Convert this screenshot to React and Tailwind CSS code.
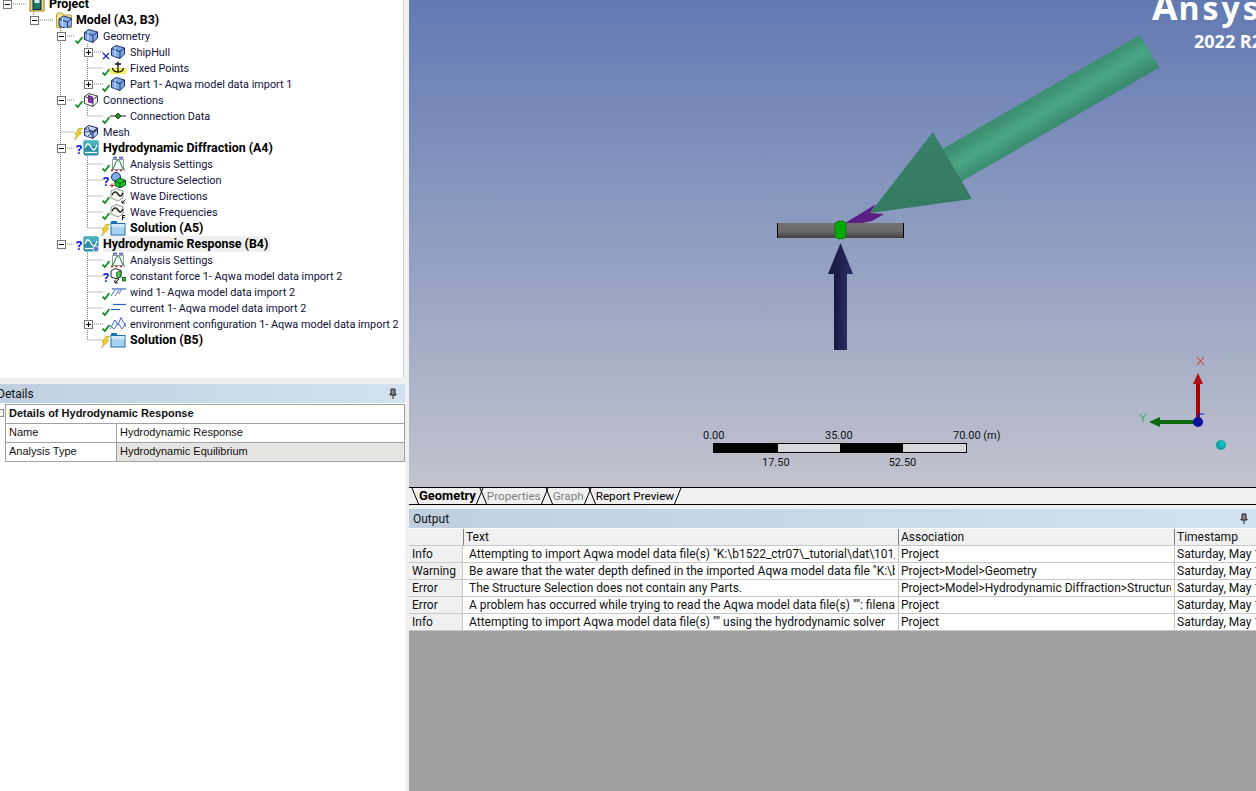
import React from 'react';

const Cube = ({ fill = '#7fa8e8', x = 0, y = 0 }) => (
    <g transform={`translate(${x} ${y})`} stroke="#1b2f6b" strokeWidth="1" strokeLinejoin="round">
        <path d="M1.5 4.5 L6 1.5 L14.5 4 L14.5 10 L10 14.5 L1.5 11.5 Z" fill={fill} />
        <path d="M1.5 4.5 L10 7.5 L14.5 4 M10 7.5 L10 14.5" fill="none" />
        <path d="M5 3 L5 12.5" stroke="#dbe7fb" fill="none" />
    </g>
);

const WaveBox = ({ clock }) => (
    <g>
        <rect x="0.5" y="0.5" width="15" height="15" rx="2" fill="#2a8ea0" />
        <path d="M0.5 0.5 H15.5 V6 H0.5 Z" fill="#46b0bc" />
        <path d="M2 8 C4 2, 6 3, 8 7 S12 11, 14 5" stroke="#fff" strokeWidth="1.3" fill="none" />
        <path d="M2 12.5 H14" stroke="#fff" strokeWidth="1.3" />
        {clock && <circle cx="13" cy="13" r="3" fill="#5b7fd0" stroke="#fff" strokeWidth="0.8" />}
    </g>
);

const Folder = () => (
    <g>
        <path d="M0.5 3 L1.5 1 H6.5 L7.5 3 H15.5 V15.5 H0.5 Z" fill="#1a6fb0" />
        <rect x="1.5" y="4" width="13" height="10.5" fill="#a9d2f2" />
        <rect x="1.5" y="4" width="13" height="3" fill="#d3e9fa" />
    </g>
);

const Bell = () => (
    <g fill="none">
        <path d="M1 3 H5 M2 1.5 V3 M4 1.5 V3 M7 3 H11 M8 1.5 V3 M10 1.5 V3" stroke="#2233bb" transform="translate(2 -1)" />
        <rect x="2.5" y="3.5" width="11" height="10" stroke="#999" />
        <path d="M1.5 13.5 C5 13, 5 4, 8 4 S11 13, 14.5 13.5" stroke="#2c8a4a" strokeWidth="1.2" />
        <path d="M1 14.5 H15" stroke="#c02020" strokeDasharray="2 2.5" strokeWidth="1.5" />
    </g>
);

const WaveCube = ({ mark }) => (
    <g>
        <path d="M1 3 L6 0.5 L13 3 L13 10 L8 13 L1 10 Z" fill="#f4f4ee" stroke="#999" />
        <path d="M2 7 C4 3, 6 3, 8 6 S11 9, 13 5" stroke="#111" strokeWidth="1.4" fill="none" />
        {mark === 'arrow' && <path d="M15.5 11.5 L12 15 M12 12.5 V15 H14.5" stroke="#111" fill="none" />}
        {mark === 'f' && <path d="M15 11.5 H12.5 V16 M12.5 13.5 H14.5" stroke="#111" fill="none" />}
    </g>
);

const icons = {
    project: (
        <g>
            <rect x="1" y="1" width="14" height="14" fill="#f2d878" stroke="#9a7d20" />
            <rect x="4" y="2.5" width="8" height="11" fill="#1f7a6a" stroke="#124" />
            <rect x="5.5" y="4" width="5" height="3" fill="#cfeee8" />
        </g>
    ),
    model: (
        <g>
            <path d="M0.5 3 L1.5 1 H6.5 L7.5 3 H15.5 V15.5 H0.5 Z" fill="#f4e08e" stroke="#b9a24a" />
            <Cube x="1.5" y="2.5" fill="#86afe8" />
        </g>
    ),
    cube: <Cube />,
    anchor: (
        <g>
            <rect x="0" y="8" width="16" height="6" fill="#f7f05a" />
            <path d="M8 1.5 V12 M5 4 H11 M2.5 8 C3 11, 5 12, 8 12 S13 11, 13.5 8" stroke="#111" strokeWidth="1.3" fill="none" />
        </g>
    ),
    connections: (
        <g stroke="#444" fill="#f4f4f4">
            <path d="M1.5 4.5 L6 1.5 L14.5 4 L14.5 10 L10 14.5 L1.5 11.5 Z" />
            <path d="M5.5 3.5 L9.5 5 L9.5 11 L5.5 10 Z" fill="#a52cc8" stroke="#6b1f85" />
            <path d="M1.5 4.5 L10 7.5 L14.5 4 M10 7.5 L10 14.5" fill="none" />
        </g>
    ),
    connectionData: (
        <g>
            <path d="M0 8 H16" stroke="#222" />
            <path d="M8 5 L11 8 L8 11 L5 8 Z" fill="#1f8a2a" stroke="#0d5a15" />
        </g>
    ),
    mesh: (
        <g>
            <Cube fill="#c5d6f0" />
            <path d="M1.5 8 L14.5 7 M5 3 L10 14 M10 7.5 L5 12 M14.5 4 L10 10" stroke="#1b2f6b" strokeWidth="0.8" fill="none" />
        </g>
    ),
    diffraction: <WaveBox />,
    response: <WaveBox clock />,
    settings: <Bell />,
    selection: (
        <g>
            <circle cx="6" cy="5" r="4.5" fill="#7fa8e8" stroke="#1b2f6b" />
            <path d="M5 9 L10 6 L15.5 8.5 L15.5 13 L10 16 L5 13.5 Z" fill="#18c828" stroke="#0a4d12" />
            <path d="M5 9 L10 11.5 L15.5 8.5 M10 11.5 V16" stroke="#0a4d12" fill="none" />
            <path d="M0 13.5 H4 M2 11.5 V15.5" stroke="#c01818" fill="none" />
        </g>
    ),
    waveDir: <WaveCube mark="arrow" />,
    waveFreq: <WaveCube mark="f" />,
    solution: <Folder />,
    force: (
        <g>
            <path d="M1 3 L5 0.5 L11 2.5 L11 8.5 L7 11 L1 9 Z" fill="#fff" stroke="#222" />
            <path d="M6.5 4.5 L11 2.5 L11 8.5 L7 11 Z" fill="#37d637" stroke="#222" strokeWidth="0.7" />
            <path d="M9 11 L5 15 M5 12 V15 H8" stroke="#111" fill="none" />
            <rect x="12.5" y="9.5" width="3.5" height="3.5" fill="#18c828" stroke="#111" strokeWidth="0.6" />
        </g>
    ),
    wind: (
        <g stroke="#2f5fc0" fill="none">
            <path d="M2 5 H16" strokeWidth="1.2" />
            <path d="M1 12 L5 6 M5 12 L9 6 M9 10 L11 6" strokeWidth="0.9" />
        </g>
    ),
    current: (
        <g stroke="#2f5fc0" fill="none" strokeWidth="1.2">
            <path d="M3 4.5 H16" />
            <path d="M1 9.5 H10" />
        </g>
    ),
    environment: <path d="M0 13 L5 4 L8 9 L11 1.5 L16 11 M0 9 L4 13 L8 7 L12 13 L16 7" stroke="#2f5fc0" strokeWidth="0.9" fill="none" />,
};

const Status = ({ type }) => {
    if (type === 'check') {
        return (
            <svg width="8" height="8" viewBox="0 0 8 8" className="self-end">
                <path d="M0.5 4.5 L2.8 7 L7.5 1" stroke="#0b8f1c" strokeWidth="1.8" fill="none" />
            </svg>
        );
    }
    if (type === 'cross') {
        return (
            <svg width="8" height="8" viewBox="0 0 8 8" className="self-end">
                <path d="M1 1 L7 7 M7 1 L1 7" stroke="#1a2fb0" strokeWidth="1.4" fill="none" />
            </svg>
        );
    }
    if (type === 'bolt') {
        return (
            <svg width="9" height="12" viewBox="0 0 9 12" className="self-end shrink-0 -ml-px">
                <path d="M5 0 L8.5 0 L5.5 4.5 L8 4.5 L0.5 12 L3 6.5 L1 6.5 Z" fill="#f1d21c" stroke="#8a7a10" strokeWidth="0.4" />
            </svg>
        );
    }
    if (type === 'question') {
        return <span className="self-end w-2 text-center text-[13px] leading-[12px] font-bold text-[#1420e0]">?</span>;
    }
    return null;
};

// level, expander, status, icon, label, bold
const treeRows = [
    { pl: 'pl-[3px]', exp: '-', icon: 'project', label: 'Project', bold: true },
    { pl: 'pl-[30px]', exp: '-', icon: 'model', label: 'Model (A3, B3)', bold: true },
    { pl: 'pl-[57px]', exp: '-', status: 'check', icon: 'cube', label: 'Geometry' },
    { pl: 'pl-[84px]', exp: '+', status: 'cross', icon: 'cube', label: 'ShipHull' },
    { pl: 'pl-[84px]', status: 'check', icon: 'anchor', label: 'Fixed Points' },
    { pl: 'pl-[84px]', exp: '+', status: 'check', icon: 'cube', label: 'Part 1- Aqwa model data import 1' },
    { pl: 'pl-[57px]', exp: '-', status: 'check', icon: 'connections', label: 'Connections' },
    { pl: 'pl-[84px]', status: 'check', icon: 'connectionData', label: 'Connection Data' },
    { pl: 'pl-[57px]', status: 'bolt', icon: 'mesh', label: 'Mesh' },
    { pl: 'pl-[57px]', exp: '-', status: 'question', icon: 'diffraction', label: 'Hydrodynamic Diffraction (A4)', bold: true },
    { pl: 'pl-[84px]', status: 'check', icon: 'settings', label: 'Analysis Settings' },
    { pl: 'pl-[84px]', status: 'question', icon: 'selection', label: 'Structure Selection' },
    { pl: 'pl-[84px]', status: 'check', icon: 'waveDir', label: 'Wave Directions' },
    { pl: 'pl-[84px]', status: 'check', icon: 'waveFreq', label: 'Wave Frequencies' },
    { pl: 'pl-[84px]', status: 'bolt', icon: 'solution', label: 'Solution (A5)', bold: true },
    { pl: 'pl-[57px]', exp: '-', status: 'question', icon: 'response', label: 'Hydrodynamic Response (B4)', bold: true, selected: true },
    { pl: 'pl-[84px]', status: 'check', icon: 'settings', label: 'Analysis Settings' },
    { pl: 'pl-[84px]', status: 'question', icon: 'force', label: 'constant force 1- Aqwa model data import 2' },
    { pl: 'pl-[84px]', status: 'check', icon: 'wind', label: 'wind 1- Aqwa model data import 2' },
    { pl: 'pl-[84px]', status: 'check', icon: 'current', label: 'current 1- Aqwa model data import 2' },
    { pl: 'pl-[84px]', exp: '+', status: 'check', icon: 'environment', label: 'environment configuration 1- Aqwa model data import 2' },
    { pl: 'pl-[84px]', status: 'bolt', icon: 'solution', label: 'Solution (B5)', bold: true },
];

const Expander = ({ kind }) => (
    <svg width="9" height="9" viewBox="0 0 9 9" className="shrink-0 relative z-10">
        <rect x="0.5" y="0.5" width="8" height="8" fill="#fff" stroke="#777" />
        <path d={kind === '+' ? 'M2 4.5 H7 M4.5 2 V7' : 'M2 4.5 H7'} stroke="#000" />
    </svg>
);

const TreeRow = ({ row }) => (
    <div className={`flex items-center h-4 ${row.pl}`}>
        <div className="w-[9px] shrink-0 flex">{row.exp && <Expander kind={row.exp} />}</div>
        <div className="w-[9px] shrink-0" />
        <div className="w-2 h-4 shrink-0 flex items-end relative z-10"><Status type={row.status} /></div>
        <svg width="16" height="16" viewBox="0 0 16 16" className="shrink-0 relative z-10">{icons[row.icon]}</svg>
        <span className={`ml-1 whitespace-nowrap leading-4 ${row.bold ? 'text-[12.4px] font-bold text-[#000]' : 'text-[10.85px] mt-px text-[#101038]'} ${row.selected ? 'bg-[#f0f0f0] pr-[2px]' : ''}`}>
            {row.label}
        </span>
    </div>
);

// dotted tree guides
const guides = 'M11 4 H27 M33.5 12 V16 M38 20 H54 M60.5 26 V244 M65 36 H75 M65 100 H75 M60.5 132 H75 M65 148 H75 M65 244 H75 M87.5 44 V80 M92 52 H103 M87.5 68 H103 M92 84 H103 M87.5 104 V116 H103 M87.5 156 V228 M87.5 164 H103 M87.5 180 H103 M87.5 196 H103 M87.5 212 H103 M87.5 228 H103 M87.5 252 V340 M87.5 260 H103 M87.5 276 H103 M87.5 292 H103 M87.5 308 H103 M92 324 H103 M87.5 340 H103';

const Pin = () => (
    <svg width="8" height="11" viewBox="0 0 8 11" className="shrink-0">
        <path d="M2 1 H6 V6 H7 V7 H1 V6 H2 Z M4 7 V11" stroke="#222" fill="#888" strokeWidth="1" />
    </svg>
);

const Scene = () => (
    <svg viewBox="0 0 847 487" width="847" height="487" className="absolute inset-0">
        <defs>
            <linearGradient id="shaft" x1="1140" y1="35" x2="1159.5" y2="67.5" gradientUnits="userSpaceOnUse">
                <stop offset="0" stopColor="#3d8f72" />
                <stop offset="0.45" stopColor="#4aa684" />
                <stop offset="1" stopColor="#37866b" />
            </linearGradient>
            <linearGradient id="cone" x1="0" y1="0" x2="0" y2="1">
                <stop offset="0" stopColor="#3a7f68" />
                <stop offset="1" stopColor="#347a62" />
            </linearGradient>
            <linearGradient id="barGrad" x1="0" y1="0" x2="0" y2="1">
                <stop offset="0" stopColor="#727272" />
                <stop offset="0.55" stopColor="#6a6a6a" />
                <stop offset="1" stopColor="#404040" />
            </linearGradient>
            <linearGradient id="navy" x1="0" y1="0" x2="1" y2="0">
                <stop offset="0" stopColor="#15173d" />
                <stop offset="1" stopColor="#2a2d63" />
            </linearGradient>
            <radialGradient id="ball" cx="0.6" cy="0.4" r="0.7">
                <stop offset="0" stopColor="#18c8c8" />
                <stop offset="1" stopColor="#0f8a90" />
            </radialGradient>
        </defs>
        <g transform="translate(-409 0)">
            <path d="M930 156 L1140 35 L1159.5 67.5 L950 188 Z" fill="url(#shaft)" />
            <path d="M845 223 L860 214 L876 204 L870 213 L884 214 L872 221 L858 224 Z" fill="#5a1f82" />
            <path d="M870 213 L933 132 L972 199 Z" fill="url(#cone)" />
            <rect x="777" y="223" width="127" height="15" fill="url(#barGrad)" />
            <rect x="777" y="223" width="1" height="15" fill="#000" />
            <rect x="903" y="223" width="1" height="15" fill="#000" />
            <rect x="835" y="221" width="11" height="18" rx="4" fill="#04a804" stroke="#056a05" strokeDasharray="2 1" />
            <path d="M840.5 243 L853 274 H828 Z" fill="url(#navy)" />
            <rect x="834" y="274" width="13" height="76" fill="url(#navy)" />
            <rect x="1196" y="384" width="4" height="38" fill="#a80000" />
            <path d="M1198 373 L1203 384 H1193 Z" fill="#b01010" />
            <rect x="1160" y="420" width="38" height="4" fill="#0c6a0c" />
            <path d="M1149 422 L1160 417 V427 Z" fill="#0c6a0c" />
            <circle cx="1198" cy="422" r="5" fill="#1010a0" />
            <path d="M1197 414 H1204 M1200 414 L1198 418" stroke="#1020d0" fill="none" />
            <path d="M1197 357 L1204 365 M1204 357 L1197 365" stroke="#d03030" fill="none" />
            <path d="M1140 414 L1143 418 L1146 414 M1143 418 V422" stroke="#20b040" fill="none" />
            <circle cx="1221" cy="445" r="5" fill="url(#ball)" />
        </g>
    </svg>
);

const outputRows = [
    ['Info', 'Attempting to import Aqwa model data file(s) "K:\\b1522_ctr07\\_tutorial\\dat\\101_model.dat"', 'Project'],
    ['Warning', 'Be aware that the water depth defined in the imported Aqwa model data file "K:\\b1522_ctr07"', 'Project>Model>Geometry'],
    ['Error', 'The Structure Selection does not contain any Parts.', 'Project>Model>Hydrodynamic Diffraction>Structure Selection'],
    ['Error', 'A problem has occurred while trying to read the Aqwa model data file(s) "": filename is empty', 'Project'],
    ['Info', 'Attempting to import Aqwa model data file(s) "" using the hydrodynamic solver', 'Project'],
];

const PanelHeader = ({ title, className }) => (
    <div className={`h-[19px] shrink-0 flex items-center justify-between pr-2 bg-gradient-to-r from-[#c0cfdf] to-[#d3e2f0] text-[12px] text-[#111] ${className}`}>
        <span>{title}</span>
        <Pin />
    </div>
);

const Tab = ({ label, active, muted, className = '' }) => (
    <div className={`flex items-center h-4 ${className}`}>
        <svg width="8" height="16" viewBox="0 0 8 16" className="shrink-0">
            <path d="M1 0 L7.5 16" stroke="#000" fill="none" />
        </svg>
        <span className={`leading-4 whitespace-nowrap ${active ? 'text-[12.9px] font-bold text-[#000]' : muted ? 'text-[11.7px] text-[#808080]' : 'text-[11.7px] text-[#000]'}`}>{label}</span>
        <svg width="8" height="16" viewBox="0 0 8 16" className="shrink-0">
            <path d="M0.5 16 L7 0" stroke="#000" fill="none" />
        </svg>
    </div>
);

export default function App() {
    return (
        <div className="w-[1256px] h-[791px] overflow-hidden flex bg-white font-['Roboto',sans-serif]">
            {/* left column */}
            <div className="w-[409px] shrink-0 flex flex-col bg-[#f0f0f0]">
                <div className="h-[378px] shrink-0 mr-[5px] bg-white border-r border-[#d8d8d8] relative overflow-hidden">
                    <svg width="404" height="378" className="absolute inset-0">
                        <path d={guides} stroke="#808080" strokeDasharray="1 1" fill="none" />
                    </svg>
                    <div className="relative -mt-1">
                        {treeRows.map((row, i) => <TreeRow key={i} row={row} />)}
                    </div>
                </div>
                <div className="h-[6px] shrink-0" />
                <PanelHeader title="Details" className="mr-[4px] -ml-[3px]" />
                <div className="flex-1 mr-[4px] bg-white flex items-start font-['Liberation_Sans',sans-serif] text-[11px] text-[#111] pt-px">
                    <div className="w-[5px] h-[18px] flex items-center overflow-hidden">
                        <span className="block w-[4px] h-[8px] border border-l-0 border-[#888]" />
                    </div>
                    <div className="w-[400px] border border-[#a0a0a0] border-b-0">
                        <div className="h-[19px] flex items-center px-[3px] pb-[2px] font-bold border-b border-[#a0a0a0]">Details of Hydrodynamic Response</div>
                        <div className="h-[19px] grid grid-cols-[110px_1fr] border-b border-[#a0a0a0]">
                            <span className="px-[3px] leading-[16px]">Name</span>
                            <span className="px-[3px] leading-[16px] border-l border-[#a0a0a0]">Hydrodynamic Response</span>
                        </div>
                        <div className="h-[19px] grid grid-cols-[110px_1fr] border-b border-[#a0a0a0]">
                            <span className="px-[3px] leading-[16px]">Analysis Type</span>
                            <span className="px-[3px] leading-[16px] border-l border-[#a0a0a0] bg-[#e5e4e0]">Hydrodynamic Equilibrium</span>
                        </div>
                    </div>
                </div>
            </div>

            {/* right column */}
            <div className="flex-1 min-w-0 flex flex-col">
                <div className="h-[487px] shrink-0 relative overflow-hidden bg-gradient-to-b from-[#6279b2] to-[#c2c3ce]">
                    <Scene />
                    <div className="absolute left-[743px] top-[-17px] h-[46px] flex items-baseline text-[32px] tracking-[3px] leading-[46px] font-bold text-white whitespace-nowrap font-['Open_Sans',sans-serif]">
                        <span className="text-[37px] tracking-normal mr-px">A</span>
                        <span>nsys</span>
                    </div>
                    <div className="absolute left-[785px] top-[31px] text-[18px] leading-5 font-bold text-white whitespace-nowrap font-['Open_Sans',sans-serif]">2022 R2</div>
                    <div className="absolute left-[294px] top-[429px] w-[300px] text-[11px] leading-[14px] text-[#111]">
                        <div className="flex">
                            <span className="w-[21px]">0.00</span>
                            <span className="ml-[101px] w-[28px]">35.00</span>
                            <span className="ml-[100px] whitespace-nowrap">70.00 (m)</span>
                        </div>
                        <div className="flex w-[254px] h-[10px] ml-[10px] border border-black">
                            <span className="w-[64px] bg-black" />
                            <span className="w-[62px] bg-[#d8d8dc]" />
                            <span className="w-[63px] bg-black" />
                            <span className="flex-1 bg-[#d8d8dc]" />
                        </div>
                        <div className="flex mt-[3px] pl-[59px] gap-[99px]">
                            <span>17.50</span>
                            <span>52.50</span>
                        </div>
                    </div>
                </div>

                <div className="h-[18px] shrink-0 bg-[#f0f0f0] border-y border-black flex items-center pl-[2px]">
                    <Tab label="Geometry" active />
                    <Tab label="Properties" muted className="-ml-[5px]" />
                    <Tab label="Graph" muted className="-ml-1" />
                    <Tab label="Report Preview" className="-ml-1" />
                </div>

                <div className="h-[4px] shrink-0 bg-[#f0f0f0]" />
                <PanelHeader title="Output" className="pl-1" />

                <div className="text-[12px] text-[#111] bg-white">
                    <div className="h-[17px] grid grid-cols-[54px_435px_276px_1fr] bg-[#f0f0f0] border-b border-[#c8c8c8] leading-4 mt-px">
                        <span />
                        <span className="border-l border-[#808080] pl-[2px]">Text</span>
                        <span className="border-l border-[#808080] pl-[2px]">Association</span>
                        <span className="border-l border-[#808080] pl-[2px] whitespace-nowrap">Timestamp</span>
                    </div>
                    {outputRows.map((row, i) => (
                        <div key={i} className="h-[17px] grid grid-cols-[54px_435px_276px_1fr] border-b border-[#c8c8c8] leading-4 whitespace-nowrap">
                            <span className="bg-[#f0f0f0] pl-[3px] border-r border-[#c8c8c8]">{row[0]}</span>
                            <span className="pl-[6px] pr-[3px] min-w-0"><span className="block overflow-hidden">{row[1]}</span></span>
                            <span className="pl-[2px] pr-[3px] min-w-0 border-l border-[#c8c8c8]"><span className="block overflow-hidden">{row[2]}</span></span>
                            <span className="pl-[2px] border-l border-[#c8c8c8] overflow-hidden">Saturday, May 14, 2022</span>
                        </div>
                    ))}
                </div>
                <div className="flex-1 bg-[#a0a0a0]" />
            </div>
        </div>
    );
}
